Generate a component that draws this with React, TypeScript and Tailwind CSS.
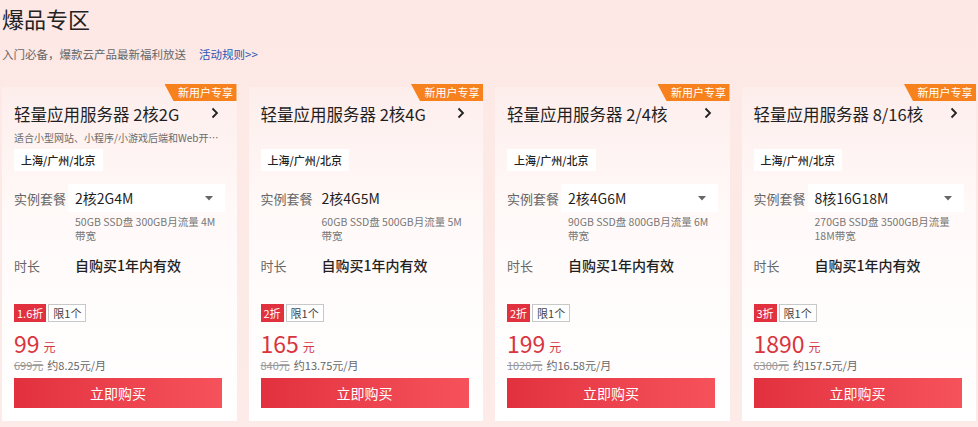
import React from "react";

interface Plan {
  title: string;
  desc?: string;
  spec: string;
  specBox: boolean;
  detail: string[];
  discount: string;
  price: string;
  original: string;
  monthly: string;
}

const plans: Plan[] = [
  {
    title: "轻量应用服务器 2核2G",
    desc: "适合小型网站、小程序/小游戏后端和Web开…",
    spec: "2核2G4M",
    specBox: true,
    detail: ["50GB SSD盘 300GB月流量 4M", "带宽"],
    discount: "1.6折",
    price: "99",
    original: "699元",
    monthly: "约8.25元/月",
  },
  {
    title: "轻量应用服务器 2核4G",
    spec: "2核4G5M",
    specBox: false,
    detail: ["60GB SSD盘 500GB月流量 5M", "带宽"],
    discount: "2折",
    price: "165",
    original: "840元",
    monthly: "约13.75元/月",
  },
  {
    title: "轻量应用服务器 2/4核",
    spec: "2核4G6M",
    specBox: true,
    detail: ["90GB SSD盘 800GB月流量 6M", "带宽"],
    discount: "2折",
    price: "199",
    original: "1020元",
    monthly: "约16.58元/月",
  },
  {
    title: "轻量应用服务器 8/16核",
    spec: "8核16G18M",
    specBox: true,
    detail: ["270GB SSD盘 3500GB月流量", "18M带宽"],
    discount: "3折",
    price: "1890",
    original: "6300元",
    monthly: "约157.5元/月",
  },
];

function PlanCard({ plan }: { plan: Plan }) {
  return (
    <div className="relative h-[334px] bg-gradient-to-b from-[#fdeeec] via-[#fffaf9] via-40% to-white px-3 pt-[15px]">
      {/* badge */}
      <div className="absolute right-0 top-[-3px] h-[17px] w-[72px] bg-[#f7811d] pl-[10px] text-center text-[11px] leading-[17px] text-white [clip-path:polygon(0_0,100%_0,100%_100%,9px_100%)]">
        新用户专享
      </div>

      <div className="flex h-[24px] items-center justify-between pr-[6px]">
        <span className="text-[16.5px] leading-[24px] text-[#1f1f1f]">{plan.title}</span>
        <svg width="8" height="12" viewBox="0 0 8 12" className="mt-[-2px]">
          <path d="M1.5 1.5 L6 6 L1.5 10.5" fill="none" stroke="#222" strokeWidth="1.8" />
        </svg>
      </div>

      <div className="mt-[4px] h-[16px] whitespace-nowrap text-[10px] leading-[16px] text-[#6b6b6b]">
        {plan.desc}
      </div>

      <div className="mt-[3px] inline-flex h-[22px] items-center bg-white px-[7px] text-[11px] font-medium text-[#222]">
        上海/广州/北京
      </div>

      <div className="mt-[13px] flex h-[28px] items-center">
        <span className="w-[54px] shrink-0 text-[13px] text-[#666]">实例套餐</span>
        <div
          className={`flex h-[28px] flex-1 items-center justify-between pl-[7px] pr-[12px] ${
            plan.specBox ? "bg-white" : ""
          }`}
        >
          <span className="text-[14px] text-[#1f1f1f]">{plan.spec}</span>
          {plan.specBox && (
            <svg width="8" height="5" viewBox="0 0 8 5">
              <path d="M0 0 L8 0 L4 4.5 Z" fill="#666" />
            </svg>
          )}
        </div>
      </div>

      <div className="mt-[3px] pl-[61px] text-[10.5px] leading-[14px] text-[#777]">
        {plan.detail.map((d) => (
          <div key={d}>{d}</div>
        ))}
      </div>

      <div className="mt-[14px] flex h-[16px] items-center">
        <span className="w-[61px] shrink-0 text-[13px] text-[#666]">时长</span>
        <span className="text-[14px] font-medium text-[#1f1f1f]">自购买1年内有效</span>
      </div>

      <div className="mt-[31px] flex h-[18px] items-center gap-[2px]">
        <span className="flex h-[18px] items-center bg-[#e2313e] px-[3px] text-[11px] text-white">
          {plan.discount}
        </span>
        <span className="flex h-[18px] items-center border border-[#c8c8c8] bg-white px-[4px] text-[11px] text-[#444]">
          限1个
        </span>
      </div>

      <div className="mt-[9px] flex h-[24px] items-end">
        <span className="text-[23px] leading-[24px] text-[#d8353e]">{plan.price}</span>
        <span className="mb-[1px] ml-[4px] text-[12px] leading-[14px] text-[#d8353e]">元</span>
      </div>

      <div className="mt-[2px] flex h-[16px] items-center gap-[4px] text-[11px] leading-[16px] text-[#666]">
        <span className="text-[#999] line-through">{plan.original}</span>
        <span>{plan.monthly}</span>
      </div>

      <button className="mt-[5px] flex h-[30px] w-[208px] items-center justify-center bg-gradient-to-r from-[#e2303e] to-[#f6525c] text-[14px] text-white">
        立即购买
      </button>
    </div>
  );
}

export default function App() {
  return (
    <div
      className="h-[427px] w-[978px] overflow-hidden bg-gradient-to-b from-[#fde8e5] to-[#fcebe8] px-[2px]"
      style={{ fontFamily: '"Noto Sans CJK SC", "Noto Sans", sans-serif' }}
    >
      <h1 className="pt-[3px] text-[22px] leading-[30px] text-[#222]">爆品专区</h1>
      <div className="mt-[13px] flex items-center text-[11.5px] leading-[16px] text-[#666]">
        <span>入门必备，爆款云产品最新福利放送</span>
        <span className="ml-[13px] text-[#2d55b0]">活动规则&gt;&gt;</span>
      </div>
      <div className="mt-[25px] grid grid-cols-4 gap-3">
        {plans.map((p) => (
          <PlanCard key={p.title} plan={p} />
        ))}
      </div>
    </div>
  );
}
